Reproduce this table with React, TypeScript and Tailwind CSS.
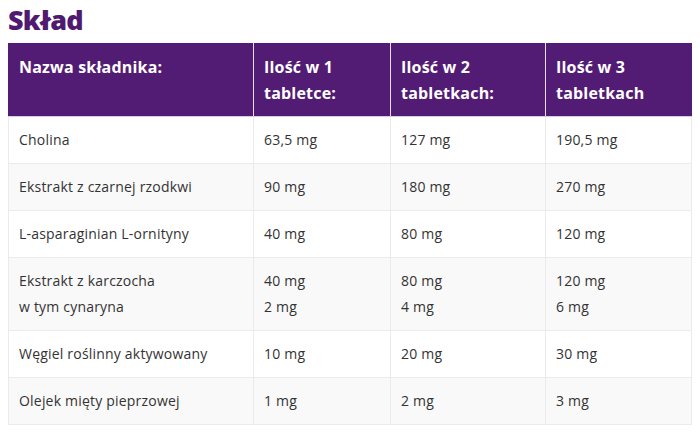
import React from 'react';

interface Row {
  name: string[];
  a: string[];
  b: string[];
  c: string[];
}

const rows: Row[] = [
  { name: ['Cholina'], a: ['63,5 mg'], b: ['127 mg'], c: ['190,5 mg'] },
  { name: ['Ekstrakt z czarnej rzodkwi'], a: ['90 mg'], b: ['180 mg'], c: ['270 mg'] },
  { name: ['L-asparaginian L-ornityny'], a: ['40 mg'], b: ['80 mg'], c: ['120 mg'] },
  {
    name: ['Ekstrakt z karczocha', 'w tym cynaryna'],
    a: ['40 mg', '2 mg'],
    b: ['80 mg', '4 mg'],
    c: ['120 mg', '6 mg'],
  },
  { name: ['Węgiel roślinny aktywowany'], a: ['10 mg'], b: ['20 mg'], c: ['30 mg'] },
  { name: ['Olejek mięty pieprzowej'], a: ['1 mg'], b: ['2 mg'], c: ['3 mg'] },
];

const headers = ['Nazwa składnika:', 'Ilość w 1 tabletce:', 'Ilość w 2 tabletkach:', 'Ilość w 3 tabletkach'];

const Cell: React.FC<{ lines: string[] }> = ({ lines }) => (
  <td className="border border-[#ebebeb] px-[10px] py-[10px] align-top">
    {lines.map((l, i) => (
      <div key={i}>{l}</div>
    ))}
  </td>
);

export default function App() {
  return (
    <div className="w-[700px] h-[432px] bg-white px-[8px] pt-[3px] font-['Open_Sans',sans-serif] overflow-hidden">
      <h2 className="text-[27px] leading-[34px] font-extrabold text-[#4f1a70] tracking-[-0.8px]">Skład</h2>
      <table className="mt-[6px] w-[683px] table-fixed border-collapse text-[14px] leading-[26px] text-[#333] tracking-[0.2px]">
        <colgroup>
          <col className="w-[245px]" />
          <col className="w-[137px]" />
          <col className="w-[155px]" />
          <col className="w-[146px]" />
        </colgroup>
        <thead>
          <tr className="bg-[#531c74] text-white">
            {headers.map((h) => (
              <th
                key={h}
                className="border border-[#d9c9e3] border-t-[#531c74] border-x-[#e6dcec] first:border-l-[#531c74] last:border-r-[#531c74] px-[10px] py-[10px] text-left align-top text-[16px] leading-[26px] font-bold"
              >
                {h}
              </th>
            ))}
          </tr>
        </thead>
        <tbody>
          {rows.map((r, i) => (
            <tr key={i} className={i % 2 === 1 ? 'bg-[#f9f9f9]' : 'bg-white'}>
              <Cell lines={r.name} />
              <Cell lines={r.a} />
              <Cell lines={r.b} />
              <Cell lines={r.c} />
            </tr>
          ))}
        </tbody>
      </table>
    </div>
  );
}
